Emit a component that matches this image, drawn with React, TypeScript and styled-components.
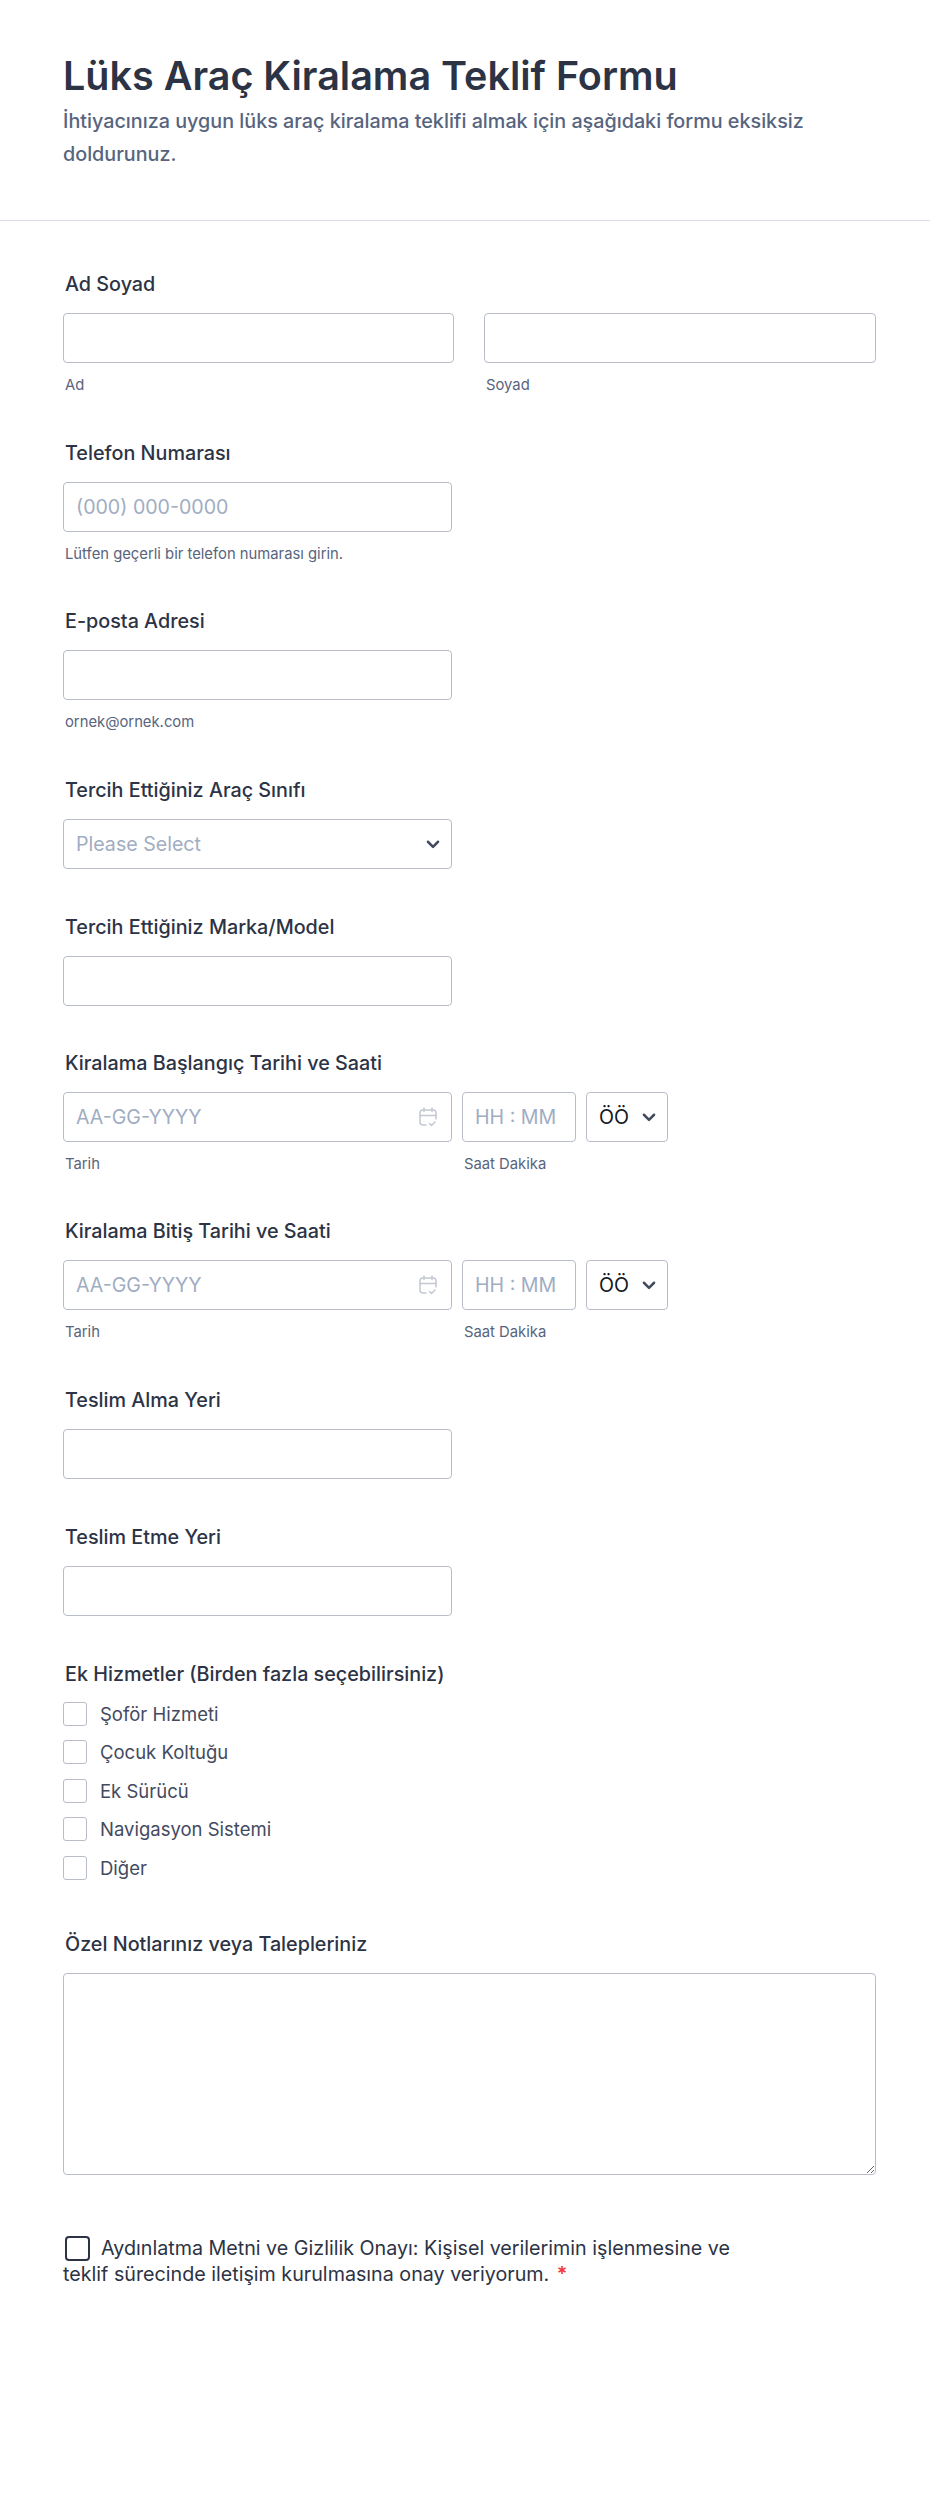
import React from 'react';
import styled, { createGlobalStyle } from 'styled-components';

const GlobalStyle = createGlobalStyle`
	html, body { margin: 0; padding: 0; background: #fff; }
	body { font-family: Inter, "Noto Sans", sans-serif; color: #2c3345; }
	* { box-sizing: border-box; }
`;

const Page = styled.div`
	width: 930px;
	height: 2494px;
	overflow: hidden;
`;

const Header = styled.header`
	height: 221px;
	padding: 52px 63px 0;
	border-bottom: 1px solid #dadee6;
`;

const Title = styled.h1`
	margin: 0;
	font-size: 39.5px;
	line-height: 48px;
	font-weight: 600;
	color: #2c3345;
`;

const Subtitle = styled.p`
	margin: 5px 0 0;
	width: 790px;
	font-size: 19.75px;
	line-height: 33px;
	font-weight: 500;
	color: #57647e;
`;

const Form = styled.form`
	display: flex;
	flex-direction: column;
	padding: 51px 54px 0 63px;
`;

const Field = styled.div<{ $gap: number }>`
	margin-bottom: ${({ $gap }) => $gap}px;
`;

const Label = styled.div`
	padding-left: 2px;
	margin-bottom: 17px;
	font-size: 19.75px;
	line-height: 24px;
	font-weight: 500;
	color: #2c3345;
`;

const Row = styled.div<{ $gap: number }>`
	display: flex;
	gap: ${({ $gap }) => $gap}px;
`;

const Column = styled.div<{ $width: number }>`
	width: ${({ $width }) => $width}px;
	flex: none;
`;

const Input = styled.input<{ $width?: number }>`
	display: block;
	width: ${({ $width }) => ($width ? `${$width}px` : '100%')};
	height: 50px;
	padding: 0 12px;
	border: 1px solid #b8bdc9;
	border-radius: 4px;
	background: #fff;
	font: 400 19.6px Inter, sans-serif;
	color: #2c3345;
	outline: none;

	&::placeholder { color: #9fadc2; opacity: 1; }
`;

const Box = styled.div<{ $muted?: boolean }>`
	display: flex;
	align-items: center;
	justify-content: space-between;
	height: 50px;
	padding: 0 9px 0 12px;
	border: 1px solid #b8bdc9;
	border-radius: 4px;
	background: #fff;
	font-size: 19.6px;
	color: ${({ $muted }) => ($muted ? '#9fadc2' : '#141824')};
`;

const Chevron = styled.svg`
	width: 18px;
	height: 18px;
	flex: none;
	color: #434a60;
`;

const CalendarIcon = styled.svg`
	width: 18px;
	height: 20px;
	margin-right: 5px;
	flex: none;
	color: #c3c8d3;
`;

const SubLabel = styled.div`
	padding-left: 2px;
	margin-top: 13px;
	font-size: 14.8px;
	line-height: 18px;
	color: #57647e;
`;

const Options = styled.div`
	display: flex;
	flex-direction: column;
	gap: 14.5px;
	margin-top: -1px;
`;

const Option = styled.label`
	display: flex;
	align-items: center;
	gap: 13px;
	height: 24px;
	font-size: 18.5px;
	color: #434a60;
`;

const Check = styled.span`
	width: 24px;
	height: 24px;
	flex: none;
	border: 1px solid #b8bdc9;
	border-radius: 3px;
	background: #fff;
`;

const TextArea = styled.textarea`
	display: block;
	width: 813px;
	height: 202px;
	border: 1px solid #b8bdc9;
	border-radius: 4px;
	background: #fff;
	outline: none;
`;

const Consent = styled.div`
	width: 680px;
	font-size: 19.7px;
	line-height: 26px;
	color: #2c3345;
`;

const ConsentBox = styled.span`
	display: inline-block;
	vertical-align: -6px;
	width: 25px;
	height: 25px;
	margin: 0 11px 0 2px;
	border: 2px solid #2c3345;
	border-radius: 4px;
`;

const Required = styled.span`
	margin-left: 2px;
	color: #f23a3c;
	font-weight: 600;
`;

const ChevronDown = () => (
	<Chevron viewBox="0 0 16 16" fill="none" stroke="currentColor" strokeWidth="2.2" strokeLinecap="round" strokeLinejoin="round">
		<path d="M3.5 6 8 10.5 12.5 6" />
	</Chevron>
);

const Calendar = () => (
	<CalendarIcon viewBox="0 0 18 20" fill="none" stroke="currentColor" strokeWidth="1.5" strokeLinecap="round" strokeLinejoin="round">
		<path d="M7 18H4a3 3 0 0 1-3-3V6a3 3 0 0 1 3-3h10a3 3 0 0 1 3 3v6" />
		<path d="M5 1v3.5M13 1v3.5M1 8.5h16M10.5 16.5l2 2 3.5-3.5" />
	</CalendarIcon>
);

const DateTime = ({ label }: { label: string }) => (
	<Field $gap={46.5}>
		<Label>{ label }</Label>
		<Row $gap={10}>
			<Column $width={389}>
				<Box $muted>
					AA-GG-YYYY
					<Calendar />
				</Box>
				<SubLabel>Tarih</SubLabel>
			</Column>
			<Column $width={114}>
				<Input placeholder="HH : MM" />
				<SubLabel>Saat Dakika</SubLabel>
			</Column>
			<Column $width={82}>
				<Box>
					ÖÖ
					<ChevronDown />
				</Box>
			</Column>
		</Row>
	</Field>
);

const services = ['Şoför Hizmeti', 'Çocuk Koltuğu', 'Ek Sürücü', 'Navigasyon Sistemi', 'Diğer'];

const App = () => (
	<Page>
		<GlobalStyle />
		<Header>
			<Title>Lüks Araç Kiralama Teklif Formu</Title>
			<Subtitle>İhtiyacınıza uygun lüks araç kiralama teklifi almak için aşağıdaki formu eksiksiz doldurunuz.</Subtitle>
		</Header>
		<Form>
			<Field $gap={46.5}>
				<Label>Ad Soyad</Label>
				<Row $gap={30}>
					<Column $width={391}>
						<Input />
						<SubLabel>Ad</SubLabel>
					</Column>
					<Column $width={392}>
						<Input />
						<SubLabel>Soyad</SubLabel>
					</Column>
				</Row>
			</Field>
			<Field $gap={46.5}>
				<Label>Telefon Numarası</Label>
				<Input $width={389} placeholder="(000) 000-0000" />
				<SubLabel>Lütfen geçerli bir telefon numarası girin.</SubLabel>
			</Field>
			<Field $gap={46.5}>
				<Label>E-posta Adresi</Label>
				<Input $width={389} />
				<SubLabel>ornek@ornek.com</SubLabel>
			</Field>
			<Field $gap={46}>
				<Label>Tercih Ettiğiniz Araç Sınıfı</Label>
				<Column $width={389}>
					<Box $muted>
						Please Select
						<ChevronDown />
					</Box>
				</Column>
			</Field>
			<Field $gap={45}>
				<Label>Tercih Ettiğiniz Marka/Model</Label>
				<Input $width={389} />
			</Field>
			<DateTime label="Kiralama Başlangıç Tarihi ve Saati" />
			<DateTime label="Kiralama Bitiş Tarihi ve Saati" />
			<Field $gap={46}>
				<Label>Teslim Alma Yeri</Label>
				<Input $width={389} />
			</Field>
			<Field $gap={46}>
				<Label>Teslim Etme Yeri</Label>
				<Input $width={389} />
			</Field>
			<Field $gap={52}>
				<Label>Ek Hizmetler (Birden fazla seçebilirsiniz)</Label>
				<Options>
					{ services.map((service) => (
						<Option key={service}>
							<Check />
							{ service }
						</Option>
					)) }
				</Options>
			</Field>
			<Field $gap={60}>
				<Label>Özel Notlarınız veya Talepleriniz</Label>
				<TextArea />
			</Field>
			<Consent>
				<ConsentBox />
				Aydınlatma Metni ve Gizlilik Onayı: Kişisel verilerimin işlenmesine ve teklif sürecinde iletişim kurulmasına onay veriyorum.
				{' '}
				<Required>*</Required>
			</Consent>
		</Form>
	</Page>
);

export default App;
